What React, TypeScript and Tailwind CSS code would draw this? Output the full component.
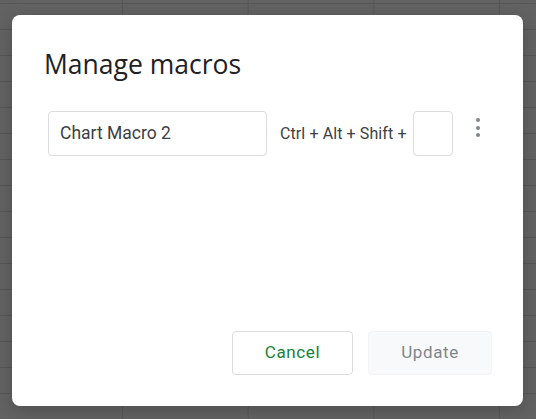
export default function App() {
  return (
    <div
      className="w-[536px] h-[419px] overflow-hidden bg-[#626262] bg-[linear-gradient(to_right,#565656_1px,transparent_1px),linear-gradient(to_bottom,#565656_1px,transparent_1px)] bg-[size:125.67px_26px] bg-[position:-3.67px_3px] pt-[15px] pl-[12px]"
      style={{ fontFamily: 'Roboto, "Liberation Sans", sans-serif' }}
    >
      <div className="flex h-[391px] w-[511px] flex-col rounded-lg bg-white shadow-[0_4px_16px_rgba(0,0,0,0.2)]">
        <h1 className="mt-[33px] ml-[32px] text-[26.5px] leading-8 font-normal tracking-[0px] text-[#202124] font-['Open_Sans',sans-serif]">
          Manage macros
        </h1>
        <div className="mt-[31px] ml-[36px] flex items-center">
          <div className="flex h-[45px] w-[219px] items-center rounded border border-[#dadce0] px-[11px] text-[17.5px] text-[#3c4043]">
            Chart Macro 2
          </div>
          <span className="ml-[13px] text-[16px] tracking-[0.1px] text-[#3c4043]">Ctrl + Alt + Shift +</span>
          <div className="ml-[6px] h-[45px] w-[40px] rounded border border-[#dadce0]" />
          <div className="ml-[23px] flex flex-col gap-[3.5px] self-start pt-[7px]">
            <span className="h-[4px] w-[4px] rounded-full bg-[#80868b]" />
            <span className="h-[4px] w-[4px] rounded-full bg-[#80868b]" />
            <span className="h-[4px] w-[4px] rounded-full bg-[#80868b]" />
          </div>
        </div>
        <div className="mt-auto mr-[31px] mb-[31px] flex justify-end gap-[15px]">
          <button className="h-[44px] w-[121px] rounded border border-[#dadce0] bg-white text-[17px] font-normal tracking-[0.6px] text-[#188038]">
            Cancel
          </button>
          <button className="h-[44px] w-[124px] rounded border border-[#f3f3f3] bg-[#f8f9fa] text-[17px] font-normal tracking-[0.6px] text-[#80868b]">
            Update
          </button>
        </div>
      </div>
    </div>
  );
}
